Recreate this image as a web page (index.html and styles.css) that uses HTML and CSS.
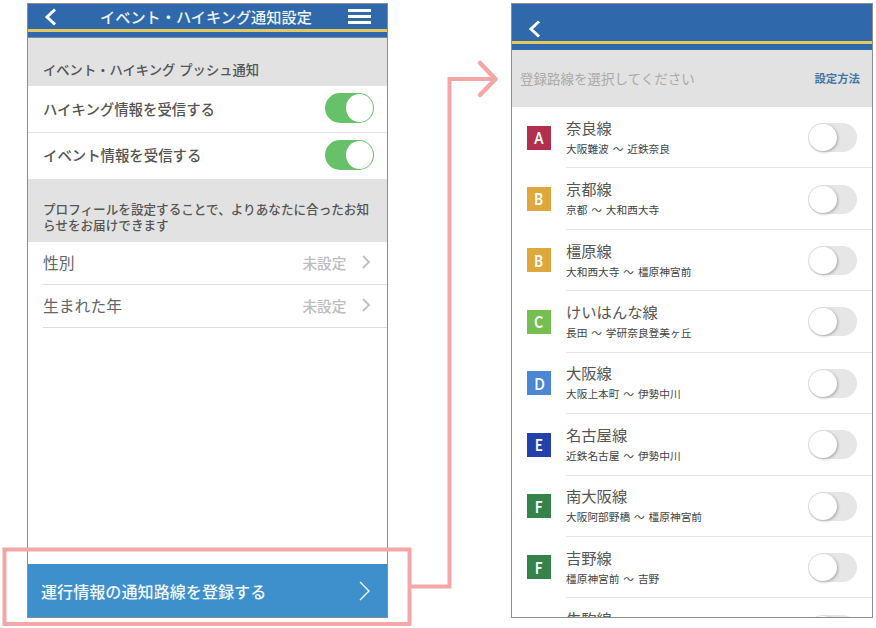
FILE: index.html
```html
<!DOCTYPE html>
<html lang="ja">
<head>
<meta charset="utf-8">
<title>通知設定</title>
<link rel="stylesheet" href="styles.css">
</head>
<body>
<main class="stage">
  <section class="phone phone-left">
    <header class="bar bar-left">
      <div class="bar-main">
        <svg class="back" viewBox="0 0 14 18"><path d="M12 1.500 4 9l8 7.500"/></svg>
        <h1 class="title">イベント・ハイキング通知設定</h1>
        <div class="burger"><i></i><i></i><i></i></div>
      </div>
      <div class="stripe"></div>
    </header>
    <h2 class="sec sec-push">イベント・ハイキング プッシュ通知</h2>
    <div class="srow srow-first"><span>ハイキング情報を受信する</span><span class="tog on"></span></div>
    <div class="srow"><span>イベント情報を受信する</span><span class="tog on"></span></div>
    <p class="sec sec-profile">プロフィールを設定することで、よりあなたに合ったお知らせをお届けできます</p>
    <div class="prow"><span>性別</span><span class="val">未設定<svg class="chev" viewBox="0 0 10 16"><path d="M2 2l6 6-6 6"/></svg></span></div>
    <div class="prow"><span>生まれた年</span><span class="val">未設定<svg class="chev" viewBox="0 0 10 16"><path d="M2 2l6 6-6 6"/></svg></span></div>
    <a class="cta">運行情報の通知路線を登録する<svg class="cta-chev" viewBox="0 0 14 22"><path d="M2 2l9 9-9 9"/></svg></a>
  </section>

  <section class="phone phone-right">
    <header class="bar bar-right">
      <div class="bar-main bar-main-r">
        <svg class="back" viewBox="0 0 14 18"><path d="M12 1.500 4 9l8 7.500"/></svg>
      </div>
      <div class="stripe"></div>
    </header>
    <div class="pick"><span>登録路線を選択してください</span><a class="how">設定方法</a></div>
    <ul class="lines">
      <li class="line"><b class="badge c-a"><span>A</span></b><div class="info"><div class="name">奈良線</div><div class="sub">大阪難波 〜 近鉄奈良</div></div><span class="tog"></span></li>
      <li class="line"><b class="badge c-b"><span>B</span></b><div class="info"><div class="name">京都線</div><div class="sub">京都 〜 大和西大寺</div></div><span class="tog"></span></li>
      <li class="line"><b class="badge c-b"><span>B</span></b><div class="info"><div class="name">橿原線</div><div class="sub">大和西大寺 〜 橿原神宮前</div></div><span class="tog"></span></li>
      <li class="line"><b class="badge c-c"><span>C</span></b><div class="info"><div class="name">けいはんな線</div><div class="sub">長田 〜 学研奈良登美ヶ丘</div></div><span class="tog"></span></li>
      <li class="line"><b class="badge c-d"><span>D</span></b><div class="info"><div class="name">大阪線</div><div class="sub">大阪上本町 〜 伊勢中川</div></div><span class="tog"></span></li>
      <li class="line"><b class="badge c-e"><span>E</span></b><div class="info"><div class="name">名古屋線</div><div class="sub">近鉄名古屋 〜 伊勢中川</div></div><span class="tog"></span></li>
      <li class="line"><b class="badge c-f"><span>F</span></b><div class="info"><div class="name">南大阪線</div><div class="sub">大阪阿部野橋 〜 橿原神宮前</div></div><span class="tog"></span></li>
      <li class="line"><b class="badge c-f"><span>F</span></b><div class="info"><div class="name">吉野線</div><div class="sub">橿原神宮前 〜 吉野</div></div><span class="tog"></span></li>
      <li class="line"><div class="info"><div class="name">生駒線</div><div class="sub"></div></div><span class="tog"></span></li>
    </ul>
  </section>

  <svg class="annot" viewBox="0 0 876 628">
    <rect x="4.500" y="549.500" width="405" height="74.500"/>
    <path d="M411 586.500H449.500V79H494"/>
    <path class="head" d="M480 63l15.500 16L480 95"/>
  </svg>
</main>
</body>
</html>
```
FILE: styles.css
```css
* { box-sizing: border-box; }
html, body { margin: 0; padding: 0; background: #fff; }
body { font-family: "Noto Sans CJK JP", "Noto Sans", sans-serif; color: #555; }
.stage { position: relative; width: 876px; height: 628px; padding: 3px 0 0 27px; display: flex; gap: 123px; align-items: flex-start; overflow: hidden; }
.phone { height: 615px; border: 1.5px solid #8c8c8c; background: #fff; display: flex; flex-direction: column; overflow: hidden; }
.phone-left { width: 361px; }
.phone-right { width: 362px; }

.bar { background: #2f69ab; flex: none; }
.bar-left { height: 33.500px; border-bottom: 1px solid #7c8ba0; }
.bar-right { height: 46px; }
.bar-main { height: 25px; display: flex; align-items: center; justify-content: space-between; padding: 0 16px 0 15px; position: relative; }
.bar-main-r { height: 37px; padding: 12px 0 0 15px; }
.stripe { height: 3px; background: #e6c85c; }
.back { width: 14px; height: 18px; fill: none; stroke: #fff; stroke-width: 3; }
.title { margin: 0; font-size: 15.200px; line-height: 25px; font-weight: 500; color: #eef3f8; position: absolute; left: 72px; white-space: nowrap; }
.burger { display: flex; flex-direction: column; gap: 3px; width: 23px; }
.burger i { display: block; height: 3px; background: #fff; }

.sec { margin: 0; background: #e2e2e2; font-weight: 500; color: #555; flex: none; }
.sec-push { height: 48px; padding: 23px 15px 0; font-size: 13.300px; line-height: 18px; word-spacing: 1px; }
.sec-profile { height: 63px; padding: 22px 15px 0 15px; font-size: 12.600px; line-height: 16px; }

.srow { height: 46px; padding: 0 13px 2px 15px; display: flex; align-items: center; justify-content: space-between; font-size: 14.400px; font-weight: 500; color: #555; flex: none; }
.srow-first { height: 47px; padding-bottom: 1px; border-bottom: 1px solid #e4e4e4; }

.tog { display: block; flex: none; width: 49px; height: 30px; border-radius: 15px; background: #e6e6e6; position: relative; }
.tog::after { content: ""; position: absolute; left: 1px; top: 1px; width: 28px; height: 28px; border-radius: 50%; background: #fff; box-shadow: 1px 1px 3px rgba(0, 0, 0, .28); }
.tog.on { background: #66c168; }
.tog.on::after { left: 21px; width: 27px; box-shadow: none; }

.prow { height: 43px; margin-left: 15px; padding: 0 16px 1px 0; border-bottom: 1px solid #ddd; display: flex; align-items: center; justify-content: space-between; font-size: 15.800px; color: #666; flex: none; }
.val { display: flex; align-items: center; gap: 14.500px; font-size: 14.700px; font-weight: 500; color: #bdbdbd; }
.chev { width: 10px; height: 16px; fill: none; stroke: #c0c0c0; stroke-width: 1.800; }

.cta { margin-top: auto; height: 53px; background: #3d90cc; color: #f2f7fb; font-size: 16.100px; font-weight: 500; display: flex; align-items: center; justify-content: space-between; padding: 0 15px 0 13px; flex: none; }
.cta-chev { width: 14px; height: 22px; fill: none; stroke: #fff; stroke-width: 1.400; }

.pick { height: 57px; background: #e2e2e2; padding: 0 12px 2px 8px; display: flex; align-items: center; justify-content: space-between; font-size: 13.500px; color: #aaa; flex: none; }
.how { font-size: 11.400px; font-weight: 700; color: #3f78a8; }

.lines { list-style: none; margin: 0; padding: 0; }
.line { height: 61.430px; margin-left: 54px; padding-right: 15px; border-bottom: 1px solid #e4e4e4; display: flex; align-items: center; position: relative; }
.line .tog { height: 29px; margin-top: 1px; }
.line .tog::after { height: 27px; }
.info { flex: 1; min-width: 0; }
.name { font-size: 15.300px; line-height: 20px; color: #555; margin-top: -2px; }
.sub { font-size: 10.700px; line-height: 14px; min-height: 14px; margin-top: 5px; color: #444; word-spacing: 1.500px; }
.badge { position: absolute; left: -39px; top: 18.500px; width: 24px; height: 24px; display: flex; align-items: center; justify-content: center; color: #fff; font: 700 17px Lato, sans-serif; }
.badge span { display: block; transform: scaleX(.78); }
.c-a { background: #b22f4d; }
.c-b { background: #dea83c; }
.c-c { background: #74bf50; }
.c-d { background: #4a86d4; }
.c-e { background: #2241ab; }
.c-f { background: #35824a; }

.annot { position: absolute; left: 0; top: 0; width: 876px; height: 628px; fill: none; stroke: #f5a6a6; stroke-width: 4; pointer-events: none; }
.head { stroke-width: 4.500; stroke-linecap: round; stroke-linejoin: round; }
```
